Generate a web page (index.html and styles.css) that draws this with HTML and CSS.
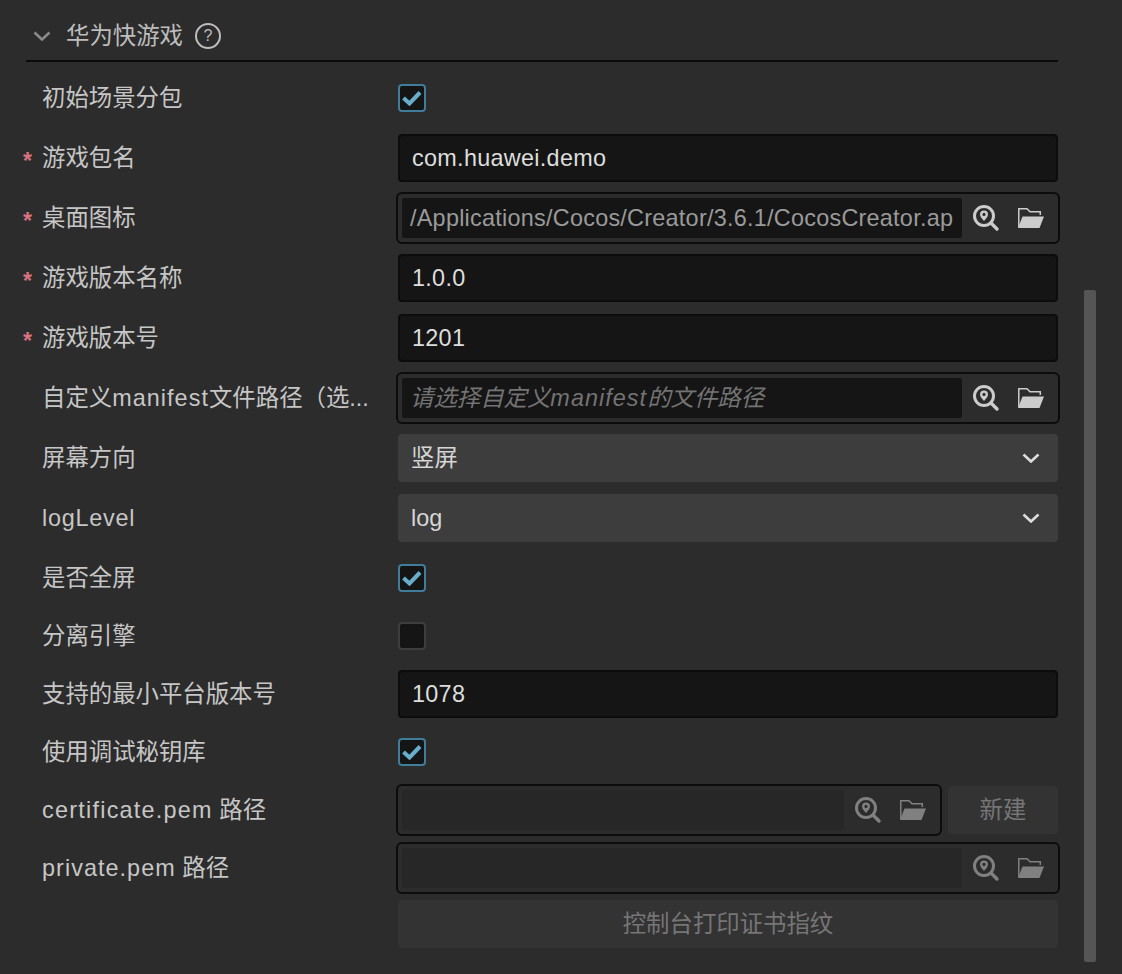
FILE: index.html
```html
<!DOCTYPE html>
<html lang="zh">
<head>
<meta charset="utf-8">
<title>华为快游戏</title>
<link rel="stylesheet" href="styles.css">
</head>
<body>
<svg class="defs" width="0" height="0" aria-hidden="true">
  <symbol id="i-search" viewBox="0 0 28 28">
    <circle cx="12" cy="12" r="9.5" fill="none" stroke="currentColor" stroke-width="3"/>
    <path d="M12 6.5a4 4 0 0 1 4 4c0 2.5-2.5 4.5-4 6.5-1.500-2-4-4-4-6.500a4 4 0 0 1 4-4z M12 8.800a1.600 1.600 0 1 0 0 3.200 1.600 1.600 0 0 0 0-3.200z" fill="currentColor" fill-rule="evenodd"/>
    <path d="M19 19l6 6" stroke="currentColor" stroke-width="3.400" stroke-linecap="round"/>
  </symbol>
  <symbol id="i-folder" viewBox="0 0 26 20">
    <path d="M.8 19V.8H9l3 3h10.300V7" fill="none" stroke="currentColor" stroke-width="1.500"/>
    <path d="M4.500 8.500H26L21.500 20H0z" fill="currentColor"/>
  </symbol>
  <symbol id="i-chev" viewBox="0 0 18 10">
    <path d="M1.500 1.500 9 8.500l7.500-7" fill="none" stroke="currentColor" stroke-width="2.600"/>
  </symbol>
  <symbol id="i-check" viewBox="0 0 20 16">
    <path d="M1.500 8 7.500 13.500 18 2.500" fill="none" stroke="currentColor" stroke-width="4"/>
  </symbol>
</svg>
<main class="panel">
  <header class="head">
    <svg class="chev-head"><use href="#i-chev"/></svg>
    <span class="head-title">华为快游戏</span>
    <span class="help">?</span>
  </header>
  <div class="rows">
    <div class="row"><label class="lbl">初始场景分包</label><div class="ctl"><span class="cb on"><svg><use href="#i-check"/></svg></span></div></div>
    <div class="row"><label class="lbl req">游戏包名</label><div class="ctl"><div class="input">com.huawei.demo</div></div></div>
    <div class="row"><label class="lbl req">桌面图标</label><div class="ctl"><div class="picker"><div class="path">/Applications/Cocos/Creator/3.6.1/CocosCreator.ap</div><svg class="ic-s"><use href="#i-search"/></svg><svg class="ic-f"><use href="#i-folder"/></svg></div></div></div>
    <div class="row"><label class="lbl req">游戏版本名称</label><div class="ctl"><div class="input">1.0.0</div></div></div>
    <div class="row"><label class="lbl req">游戏版本号</label><div class="ctl"><div class="input">1201</div></div></div>
    <div class="row"><label class="lbl">自定义<span class="lat">manifest</span>文件路径（选...</label><div class="ctl"><div class="picker"><div class="path ph">请选择自定义<span class="lat">manifest</span>的文件路径</div><svg class="ic-s"><use href="#i-search"/></svg><svg class="ic-f"><use href="#i-folder"/></svg></div></div></div>
    <div class="row"><label class="lbl">屏幕方向</label><div class="ctl"><div class="select"><span>竖屏</span><svg class="chev"><use href="#i-chev"/></svg></div></div></div>
    <div class="row"><label class="lbl"><span class="lat narrow">logLevel</span></label><div class="ctl"><div class="select"><span>log</span><svg class="chev"><use href="#i-chev"/></svg></div></div></div>
  </div>
  <div class="rows tight">
    <div class="row"><label class="lbl">是否全屏</label><div class="ctl"><span class="cb on"><svg><use href="#i-check"/></svg></span></div></div>
    <div class="row"><label class="lbl">分离引擎</label><div class="ctl"><span class="cb"></span></div></div>
    <div class="row"><label class="lbl">支持的最小平台版本号</label><div class="ctl"><div class="input">1078</div></div></div>
    <div class="row"><label class="lbl">使用调试秘钥库</label><div class="ctl"><span class="cb on"><svg><use href="#i-check"/></svg></span></div></div>
    <div class="row"><label class="lbl"><span class="lat wide-lat">certificate.pem</span> 路径</label><div class="ctl split"><div class="picker off"><div class="path"></div><svg class="ic-s"><use href="#i-search"/></svg><svg class="ic-f"><use href="#i-folder"/></svg></div><button class="btn new">新建</button></div></div>
    <div class="row"><label class="lbl"><span class="lat">private.pem</span> 路径</label><div class="ctl"><div class="picker off"><div class="path"></div><svg class="ic-s"><use href="#i-search"/></svg><svg class="ic-f"><use href="#i-folder"/></svg></div></div></div>
    <div class="row last"><div class="lbl"></div><div class="ctl"><button class="btn wide">控制台打印证书指纹</button></div></div>
  </div>
  <div class="scrollbar"></div>
</main>
</body>
</html>
```
FILE: styles.css
```css
* { box-sizing: border-box; }
html, body { margin: 0; height: 100%; }
body {
  background: #2c2c2c;
  color: #cccccc;
  font-family: "Liberation Sans", "Noto Sans CJK SC", sans-serif;
  font-size: 23.4px;
  line-height: 28px;
  overflow: hidden;
}
.defs { position: absolute; }
.panel { position: relative; width: 1122px; height: 974px; padding: 0 64px 0 26px; }
.head {
  display: flex;
  align-items: center;
  height: 62px;
  padding: 12px 0 0 7px;
  border-bottom: 2px solid #0b0b0b;
}
.chev-head { width: 18px; height: 10px; color: #8a8a8a; margin-right: 15px; }
.head-title { color: #bdbdbd; width: 117px; }
.help {
  width: 26px;
  height: 26px;
  margin-left: 12px;
  border: 2px solid #bdbdbd;
  border-radius: 50%;
  font-size: 16px;
  line-height: 22px;
  text-align: center;
  color: #bdbdbd;
}
.rows { display: flex; flex-direction: column; gap: 12px; padding-top: 12px; }
.tight { gap: 10px; }
.row { display: flex; align-items: center; height: 48px; }
.last { margin-top: -2px; }
.lbl {
  position: relative;
  flex: 0 0 372px;
  padding-left: 16px;
  white-space: nowrap;
  color: #c6c6c6;
}
.lat { letter-spacing: 1.05px; }
.narrow { letter-spacing: .75px; }
.wide-lat { letter-spacing: 1.25px; }
.req::before {
  content: "*";
  position: absolute;
  left: -3px;
  top: 3px;
  color: #d8737f;
  font-size: 23px;
  font-weight: 700;
}
.ctl { flex: 1; display: flex; align-items: center; min-width: 0; }
.cb {
  display: flex;
  align-items: center;
  justify-content: center;
  width: 28px;
  height: 28px;
  background: #151515;
  border: 2px solid #3e3e3e;
  border-radius: 4px;
  color: #68aecb;
}
.cb.on { border-color: #3f7d9b; }
.cb svg { width: 20px; height: 16px; }
.input {
  width: 100%;
  height: 48px;
  padding: 0 12px;
  background: #151515;
  border: 2px solid #0c0c0c;
  border-radius: 4px;
  line-height: 44px;
  letter-spacing: .3px;
  color: #dddddd;
}
.picker {
  flex: 1;
  display: flex;
  align-items: center;
  height: 52px;
  margin: -2px;
  padding: 4px;
  border: 2px solid #0c0c0c;
  border-radius: 6px;
  color: #cccccc;
  min-width: 0;
}
.path {
  flex: 1;
  min-width: 0;
  height: 40px;
  padding: 0 8px;
  background: #151515;
  border-radius: 2px;
  line-height: 40px;
  letter-spacing: .26px;
  white-space: nowrap;
  overflow: hidden;
  color: #9a9a9a;
}
.ph { font-style: italic; color: #737373; letter-spacing: 0; }
.ic-s { flex: none; width: 28px; height: 28px; margin: 0 0 0 10px; }
.ic-f { flex: none; width: 26px; height: 20px; margin: 0 10px 0 18px; }
.off { color: #808080; }
.off .path { background: #272727; }
.select {
  display: flex;
  align-items: center;
  justify-content: space-between;
  width: 100%;
  height: 48px;
  padding: 0 18px 0 13px;
  background: #3d3d3d;
  border-radius: 4px;
  color: #d6d6d6;
}
.chev { width: 18px; height: 10px; color: #dcdcdc; }
.btn {
  height: 48px;
  border: 0;
  border-radius: 4px;
  background: #333333;
  color: #767676;
  font: inherit;
  padding: 0;
}
.new { flex: 0 0 110px; margin-left: 8px; }
.wide { width: 100%; }
.scrollbar {
  position: absolute;
  left: 1084px;
  top: 290px;
  width: 12px;
  height: 672px;
  background: #555555;
  border-radius: 2px;
}
```
